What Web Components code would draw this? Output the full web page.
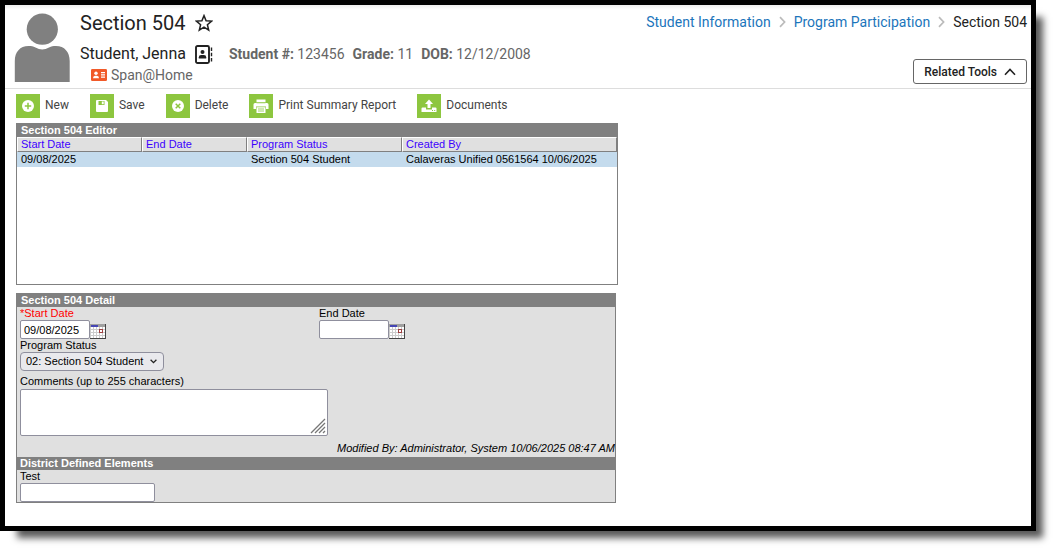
<!DOCTYPE html>
<html lang="en">
<head>
<meta charset="utf-8">
<title>Section 504</title>
<style>
  body { margin: 0; background: #fff; color: #000; font: 11px/13px "Liberation Sans", Arial, sans-serif; }
</style>
</head>
<body>
<app-window>
  <page-header></page-header>
  <tool-bar>
    <tool-button icon="new">New</tool-button>
    <tool-button icon="save">Save</tool-button>
    <tool-button icon="delete">Delete</tool-button>
    <tool-button icon="print">Print Summary Report</tool-button>
    <tool-button icon="upload">Documents</tool-button>
  </tool-bar>
  <record-list></record-list>
  <record-detail></record-detail>
</app-window>

<script>
const define = (name, markup) => {
  const template = document.createElement('template');
  template.innerHTML = markup;
  customElements.define(name, class extends HTMLElement {
    constructor() {
      super();
      this.attachShadow({ mode: 'open' }).append(template.content.cloneNode(true));
    }
  });
};

define('app-window', `
  <style>
    :host { display: block; box-sizing: border-box; margin: 0 25px 25px 0; min-height: calc(100vh - 25px);
      border: 5px solid #000; background: linear-gradient(#ececec, #fff 5px);
      box-shadow: 12px 12px 7px -5px rgba(0, 0, 0, .65); }
  </style>
  <slot></slot>`);

define('bread-crumbs', `
  <style>
    :host { display: block; font: 14px/22px Roboto, sans-serif; color: #222; }
    ol { display: flex; flex-wrap: wrap; align-items: center; gap: 8px; list-style: none; margin: 0; padding: 0; }
    li { display: flex; align-items: center; gap: 8px; white-space: nowrap; }
    a { color: #1b75bb; text-decoration: none; }
  </style>
  <nav aria-label="Breadcrumb"><ol>
    <li><a href="#">Student Information</a>
      <svg width="7" height="12" viewBox="0 0 7 12" fill="none" stroke="#bbb" stroke-width="1.7"><path d="M1 1.2 5.6 6 1 10.8"/></svg></li>
    <li><a href="#">Program Participation</a>
      <svg width="7" height="12" viewBox="0 0 7 12" fill="none" stroke="#bbb" stroke-width="1.7"><path d="M1 1.2 5.6 6 1 10.8"/></svg></li>
    <li aria-current="page">Section 504</li>
  </ol></nav>`);

define('page-header', `
  <style>
    :host { display: flex; box-sizing: border-box; padding: 6px 4px 4px 9px; border-bottom: 1px solid #ddd;
      font: 14px/18px Roboto, sans-serif; color: #222; }
    .avatar { flex: none; margin: 2px 10px 0 0; }
    .info { flex: 1; }
    .row { display: flex; align-items: center; }
    h1 { margin: 0; font: 20px/24px Roboto, sans-serif; }
    .title { gap: 9px; }
    .student { margin-top: 7px; gap: 9px; }
    .name { font-size: 16px; line-height: 24px; }
    .facts { display: flex; gap: 8px; margin-left: 7px; color: #666; }
    .program { padding-left: 11px; gap: 4px; color: #666; }
    .side { display: flex; flex-direction: column; justify-content: space-between; align-items: flex-end; }
    button { display: flex; align-items: center; gap: 7px; box-sizing: border-box; height: 25px; padding: 0 10px;
      border: 1px solid #666; border-radius: 3px; background: #fff; color: #222; font: 500 12px/16px Roboto, sans-serif; }
  </style>
  <svg class="avatar" width="56" height="69" viewBox="0 0 56 69" fill="#808080">
    <circle cx="28.3" cy="16.2" r="15.6"/>
    <path d="M.8 69V48C.8 39 6 33 14.500 33c3 0 4.500 0 7 1.600 4.500 2.600 9 2.600 13.500 0C37.500 33 39 33 42 33c8.500 0 13.700 6 13.700 15v21z"/>
  </svg>
  <div class="info">
    <div class="row title"><h1>Section 504</h1>
      <svg width="18" height="18" viewBox="0 0 18 18" fill="none" stroke="#222" stroke-width="1.5"><path d="M9 1.600 11.100 6.700 16.600 7.100 12.400 10.700 13.700 16.100 9 13.200 4.300 16.100 5.600 10.700 1.400 7.100 6.900 6.700z"/></svg>
    </div>
    <div class="row student"><span class="name">Student, Jenna</span>
      <svg width="18" height="19" viewBox="0 0 18 19"><rect x="1" y="1" width="13" height="17" rx="1.500" fill="none" stroke="#222" stroke-width="1.900"/><circle cx="7.500" cy="6.900" r="2" fill="#222"/><path d="M3.800 13.500v-1.200q0-2.300 2.300-2.300h2.800q2.300 0 2.300 2.300v1.200z" fill="#222"/><path d="M16.500 2.500v3.500M16.500 7.800v3.500M16.500 13.100v3.500" stroke="#222" stroke-width="1.400"/></svg>
      <div class="facts"><span><b>Student #:</b> 123456</span><span><b>Grade:</b> 11</span><span><b>DOB:</b> 12/12/2008</span></div>
    </div>
    <div class="row program">
      <svg width="16" height="12" viewBox="0 0 16 12"><rect width="16" height="12" rx="1.200" fill="#f15a29"/><g fill="#fff"><circle cx="5" cy="4.300" r="1.700"/><path d="M2 9.200q0-2.500 2-2.500h2q2 0 2 2.500z"/><path d="M10 3h4v1.200h-4zM10 5.300h4v1.200h-4zM10 7.600h4v1.200h-4z"/></g></svg>
      <span>Span@Home</span>
    </div>
  </div>
  <div class="side">
    <bread-crumbs></bread-crumbs>
    <button type="button">Related Tools
      <svg width="12" height="8" viewBox="0 0 12 8" fill="none" stroke="#222" stroke-width="1.600"><path d="M1 6.800 6 1.500 11 6.800"/></svg>
    </button>
  </div>`);

define('tool-bar', `
  <style>
    :host { display: flex; flex-wrap: wrap; gap: 4px 21px; padding: 5px 11px; }
  </style>
  <slot></slot>`);

const icons = {
  new: '<circle cx="12" cy="12" r="6"/><path d="M12 8.800v6.400M8.800 12h6.400" stroke="#8dc63f" stroke-width="1.500"/>',
  save: '<path d="M6 7q0-1 1-1h9l2 2v9q0 1-1 1H7q-1 0-1-1z"/><path d="M8.500 7h6v4h-6z" fill="#8dc63f"/><path d="M11.800 7.500h1.900v2.700h-1.900z"/>',
  delete: '<circle cx="12" cy="12" r="6"/><path d="M9.700 9.700l4.600 4.600M14.300 9.700l-4.600 4.600" stroke="#8dc63f" stroke-width="1.500"/>',
  print: '<path d="M7.500 5.500h9v3h-9zM6 9h12q1.500 0 1.500 1.500V15H17v-2.500H7V15H4.500v-4.500Q4.500 9 6 9zM7.500 13.300h9V19h-9z"/><path d="M9 15h6M9 17h6M7.500 8.800h9" stroke="#8dc63f" stroke-width=".8"/>',
  upload: '<path d="M12 5.500 16 10h-2.500v4h-3v-4H8z"/><path d="M5.500 13.500H9V15.500h6v-2h3.500q1 0 1 1V18h-15v-3.500q0-1 1-1z"/><path d="M15 16.500h1M17.200 16.500h1" stroke="#8dc63f" stroke-width="1"/>'
};
const toolTemplate = document.createElement('template');
toolTemplate.innerHTML = `
  <style>
    :host { display: block; }
    button { display: flex; gap: 5px; padding: 0; border: 0; background: none; color: #444;
      font: 12px/22px Roboto, sans-serif; white-space: nowrap; }
    svg { background: #8dc63f; }
  </style>
  <button type="button"><svg width="24" height="24" viewBox="0 0 24 24" fill="#fff"></svg><span><slot></slot></span></button>`;
customElements.define('tool-button', class extends HTMLElement {
  constructor() {
    super();
    this.attachShadow({ mode: 'open' }).append(toolTemplate.content.cloneNode(true));
  }
  connectedCallback() {
    this.shadowRoot.querySelector('svg').innerHTML = icons[this.getAttribute('icon')];
  }
});

define('record-list', `
  <style>
    :host { display: block; box-sizing: border-box; max-width: 602px; min-height: 162px; margin: 0 11px;
      border: 1px solid #808080; border-top: 0; }
    h2 { margin: 0; padding-left: 4px; background: #808080; color: #fff; font-size: 11px; line-height: 14px; }
    table { width: 100%; border-collapse: separate; border-spacing: 0; table-layout: fixed; }
    th, td { box-sizing: border-box; padding: 0 0 0 4px; text-align: left; font-weight: 400; white-space: nowrap; }
    th { height: 15px; padding-left: 3px; border: 1px solid; border-color: #fff #808080 #808080 #fff; background: #e0e0e0; color: #3c00ff; }
    td { height: 15px; background: #c4dbed; }
  </style>
  <h2>Section 504 Editor</h2>
  <table>
    <colgroup><col style="width:125px"><col style="width:105px"><col style="width:155px"><col></colgroup>
    <thead><tr><th>Start Date</th><th>End Date</th><th>Program Status</th><th>Created By</th></tr></thead>
    <tbody><tr><td>09/08/2025</td><td></td><td>Section 504 Student</td><td>Calaveras Unified 0561564 10/06/2025</td></tr></tbody>
  </table>`);

const dateTemplate = document.createElement('template');
dateTemplate.innerHTML = `
  <style>
    :host { display: block; }
    label { display: block; }
    .required { color: #f00; }
    .line { display: flex; align-items: flex-end; }
    input { box-sizing: border-box; width: 70px; height: 19px; padding: 0 3px; border: 1px solid #8f8f9d;
      border-radius: 2px; background: #fff; font: inherit; color: #000; }
    button { display: flex; padding: 0; border: 0; background: none; }
  </style>
  <label for="date"></label>
  <div class="line"><input id="date" type="text">
    <button type="button" aria-label="Choose date"><svg width="16" height="15" viewBox="0 0 16 15" shape-rendering="crispEdges"><path fill="#fff" d="M0 0h16v15H0z"/><path fill="#ccc" d="M0 3h1v12H0zM3 3h1v11H3zM6 3h1v11H6zM9 3h1v11H9zM12 3h1v11h-1zM0 5h15v1H0zM0 8h15v1H0zM0 11h15v1H0z"/><path fill="#a0a0a0" d="M0 0h16v3H0z"/><path fill="#4646b4" d="M1 1h7v2H1z"/><path fill="#444" d="M15 0h1v15h-1zM0 14h16v1H0z"/><path fill="#fff" stroke="#a04040" d="M9.500 5.500h3v3h-3z"/></svg></button>
  </div>`;
customElements.define('date-field', class extends HTMLElement {
  constructor() {
    super();
    this.attachShadow({ mode: 'open' }).append(dateTemplate.content.cloneNode(true));
  }
  connectedCallback() {
    const required = this.hasAttribute('required');
    const label = this.shadowRoot.querySelector('label');
    label.textContent = (required ? '*' : '') + this.getAttribute('label');
    label.classList.toggle('required', required);
    this.shadowRoot.querySelector('input').value = this.getAttribute('value') || '';
  }
});

define('record-detail', `
  <style>
    :host { display: block; box-sizing: border-box; max-width: 600px; margin: 8px 11px; border: 1px solid #808080;
      border-top: 0; background: #e0e0e0; }
    h2 { margin: 0; padding-left: 4px; background: #808080; color: #fff; font-size: 11px; line-height: 14px; }
    h2.sub { padding-left: 3px; line-height: 13px; }
    .fields { padding-left: 3px; }
    .dates { display: grid; grid-template-columns: 1fr 1fr; column-gap: 3px; }
    label { display: block; }
    .pick { position: relative; width: 144px; height: 19px; }
    .pick svg { position: absolute; right: 7px; top: 7px; pointer-events: none; }
    select { appearance: none; box-sizing: border-box; width: 100%; height: 19px; padding: 0 16px 0 5px; display: block;
      border: 1px solid #8f8f9d; border-radius: 4px; background: #e9e9ed; color: #000; font: inherit; }
    .comments { margin-top: 4px; }
    .area { position: relative; width: 308px; height: 47px; margin-top: 1px; }
    .area svg { position: absolute; right: 2px; bottom: 2px; pointer-events: none; }
    textarea, input { box-sizing: border-box; display: block; border: 1px solid #8f8f9d; border-radius: 2px;
      background: #fff; color: #000; font: inherit; }
    textarea { width: 100%; height: 100%; resize: none; }
    input { width: 135px; height: 19px; }
    .modified { margin: 5px 0 0; padding-bottom: 2px; line-height: 14px; text-align: right; font-style: italic; }
  </style>
  <h2>Section 504 Detail</h2>
  <div class="fields">
    <div class="dates"><date-field label="Start Date" value="09/08/2025" required></date-field><date-field label="End Date"></date-field></div>
    <label for="status">Program Status</label>
    <div class="pick"><select id="status"><option>02: Section 504 Student</option></select>
      <svg width="7" height="5" viewBox="0 0 7 5" fill="none" stroke="#222" stroke-width="1.300"><path d="M.6.8 3.500 3.700 6.400.8"/></svg></div>
    <label class="comments" for="comments">Comments (up to 255 characters)</label>
    <div class="area"><textarea id="comments"></textarea>
      <svg width="16" height="16" viewBox="0 0 16 16" stroke="#777" stroke-width="1.300"><path d="M1 15 15 1M5 15 15 5M9 15l6-6M13 15l2-2"/></svg></div>
  </div>
  <p class="modified">Modified By: Administrator, System 10/06/2025 08:47 AM</p>
  <h2 class="sub">District Defined Elements</h2>
  <div class="fields">
    <label for="test">Test</label>
    <input id="test" type="text">
  </div>`);
</script>
</body>
</html>
